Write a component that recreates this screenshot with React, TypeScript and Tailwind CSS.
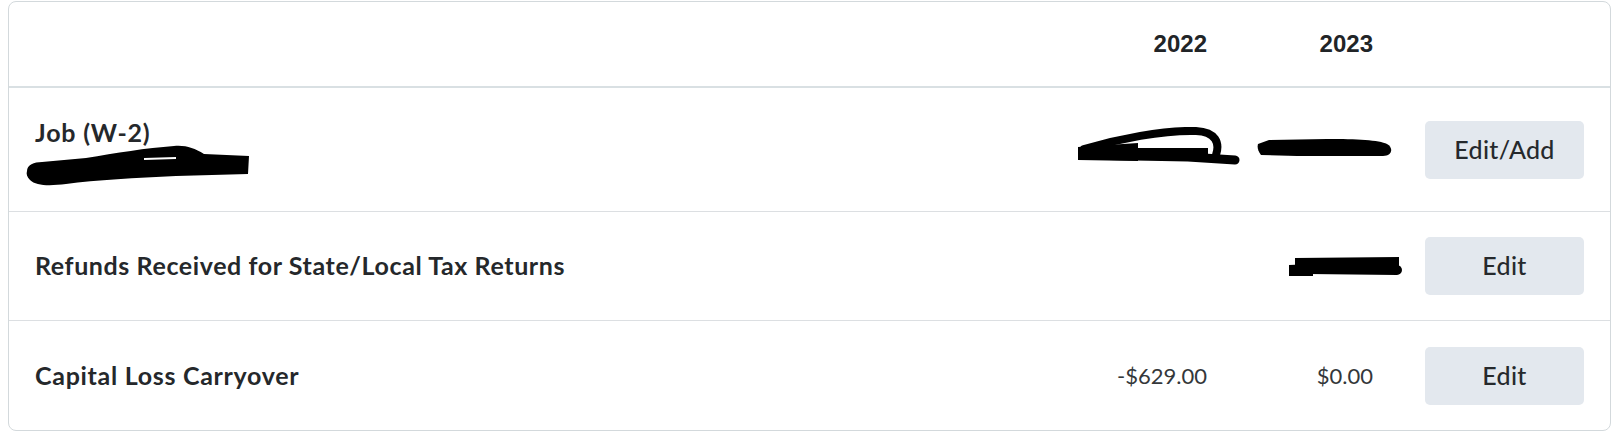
import React from 'react';

const lato = 'font-[family-name:Lato,sans-serif]';

function ScribbleSubtitle() {
  return (
    <svg width="223" height="41" viewBox="0 0 223 41" className="-mt-[3px] -ml-[9px] block">
      <path
        d="M1 26 C1 20 8 17 16 17 L60 13 C90 8 120 3 148 1 C160 0 168 3 178 9 L223 11 L222 29 L150 31 C110 33 70 35 40 39 C24 41 10 41 4 35 C1 32 0 29 1 26 Z"
        fill="#000"
      />
      <path d="M118 14 L150 13" stroke="#fff" strokeWidth="2" />
    </svg>
  );
}

function ScribbleA() {
  return (
    <svg width="163" height="38" viewBox="0 0 163 38" className="-mr-[34px] block">
      <path d="M0 20 L60 16 L60 34 L0 33 Z" fill="#000" />
      <path d="M6 22 C40 12 85 3 118 4 C138 5 142 16 138 28" fill="none" stroke="#000" strokeWidth="8" strokeLinecap="round" />
      <path d="M4 28 L110 30 L157 33" fill="none" stroke="#000" strokeWidth="9" strokeLinecap="round" />
      <path d="M10 24 L130 24" fill="none" stroke="#000" strokeWidth="6" />
    </svg>
  );
}

function ScribbleB() {
  return (
    <svg width="136" height="20" viewBox="0 0 136 20" className="-mr-[20px] block">
      <path d="M1 6 L12 2 L70 1 C100 1 122 2 130 6 C137 10 135 18 126 18 L40 18 L4 17 C1 13 0 9 1 6 Z" fill="#000" />
    </svg>
  );
}

function ScribbleC() {
  return (
    <svg width="114" height="23" viewBox="0 0 114 23" className="-mr-[30px] block">
      <path d="M6 3 L110 2 L110 12 L6 12 Z" fill="#000" />
      <path d="M0 10 L24 9 L24 21 L0 21 Z" fill="#000" />
      <path d="M20 14 L108 15" stroke="#000" strokeWidth="10" strokeLinecap="round" />
    </svg>
  );
}

function EditButton({ label }: { label: string }) {
  return (
    <button className={`ml-[52px] h-[58px] w-[159px] rounded-[5px] bg-[#e3e8ee] text-[25px] font-medium tracking-[0.3px] text-[#26292c] ${lato}`}>
      {label}
    </button>
  );
}

export default function App() {
  return (
    <div className="h-[442px] w-[1618px] bg-white">
      <div className={`mx-2 mt-px w-[1603px] rounded-lg border border-[#d3d9dc] bg-white ${lato}`}>
        <div className="flex h-[86px] items-center border-b-2 border-[#d9e0e3] px-[26px] font-[family-name:'Liberation_Sans',Arial,sans-serif] text-[24px] font-bold text-[#212427]">
          <div className="flex-1" />
          <div className="w-[166px] text-right">2022</div>
          <div className="w-[166px] text-right">2023</div>
          <div className="ml-[52px] w-[159px]" />
        </div>

        <div className="flex h-[124px] items-center border-b border-[#dcdfe2] px-[26px]">
          <div className="flex-1 pt-[2px]">
            <div className="text-[25px] leading-8 font-bold tracking-[0.8px] text-[#25282b]">Job (W-2)</div>
            <ScribbleSubtitle />
          </div>
          <div className="-mt-[8px] flex w-[166px] justify-end">
            <ScribbleA />
          </div>
          <div className="-mt-[4px] flex w-[166px] justify-end">
            <ScribbleB />
          </div>
          <EditButton label="Edit/Add" />
        </div>

        <div className="flex h-[109px] items-center border-b border-[#dcdfe2] px-[26px]">
          <div className="flex-1 text-[25px] font-bold tracking-[0.6px] text-[#25282b]">
            Refunds Received for State/Local Tax Returns
          </div>
          <div className="w-[166px]" />
          <div className="flex w-[166px] justify-end">
            <ScribbleC />
          </div>
          <EditButton label="Edit" />
        </div>

        <div className="flex h-[109px] items-center px-[26px]">
          <div className="flex-1 text-[25px] font-bold tracking-[0.7px] text-[#25282b]">Capital Loss Carryover</div>
          <div className="w-[166px] text-right text-[22px] text-[#34373a]">-$629.00</div>
          <div className="w-[166px] text-right text-[22px] text-[#34373a]">$0.00</div>
          <EditButton label="Edit" />
        </div>
      </div>
    </div>
  );
}
